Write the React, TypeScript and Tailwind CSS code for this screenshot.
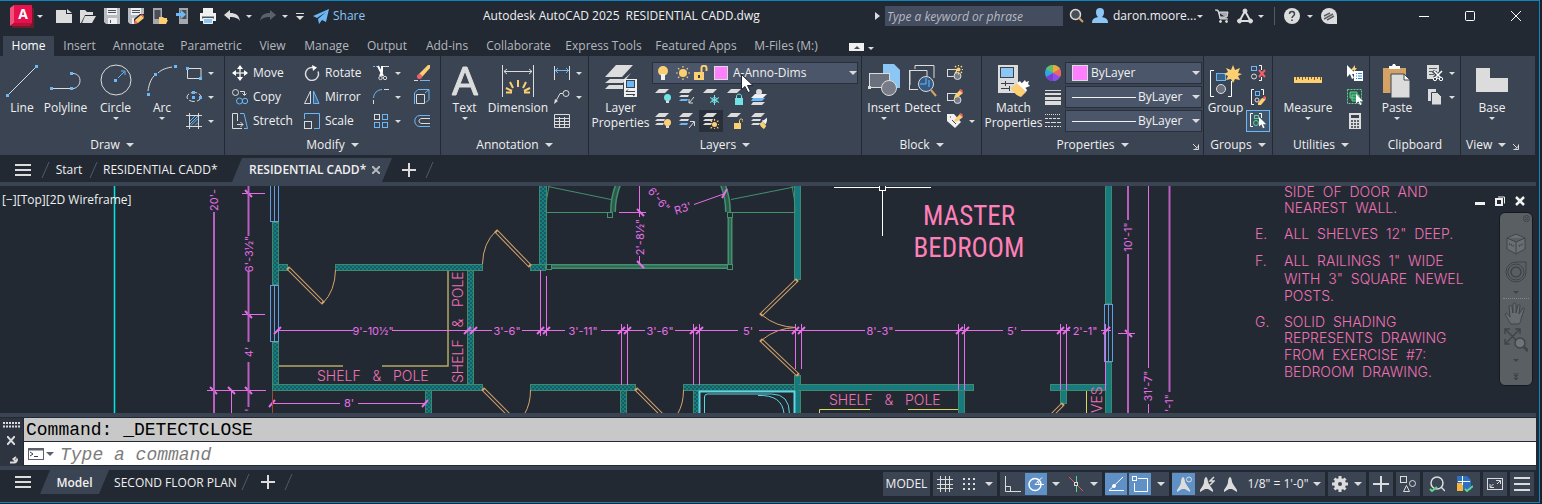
import type { ReactNode } from "react";
import clsx from "clsx";

const L = "#dcdcdc";
const B = "#6cb8f6";
const Y = "#fdcf73";
const G = "#5fd38d";
const R = "#f2606a";
const P = "#3b4453";

/* ---------- shared bits ---------- */

type IconProps = { w?: number; h?: number; children: ReactNode };

const Svg = ({ w = 16, h = 16, children }: IconProps) => (
    <svg width={w} height={h} viewBox={`0 0 ${w} ${h}`} fill="none" stroke={L} className="shrink-0" aria-hidden="true">
        {children}
    </svg>
);

const Arrow = ({ big = false }: { big?: boolean }) => (
    <svg width={big ? 8 : 6} height={big ? 4 : 3} viewBox="0 0 8 4" className="shrink-0" aria-hidden="true">
        <path d="M0 0h8L4 4z" fill={L} />
    </svg>
);

const ArrowButton = ({ label, className, big }: { label: string; className?: string; big?: boolean }) => (
    <button aria-label={label} className={clsx("flex h-6 items-center justify-center", className)}><Arrow big={big} /></button>
);

const Launcher = () => (
    <Svg w={7} h={7}><path d="M1 1l4 4" /><path d="M6.500 1.500v5h-5M3.500 6l3-3" /></Svg>
);

const Slash = () => (
    <svg width="10" height="16" viewBox="0 0 10 16" className="shrink-0" aria-hidden="true">
        <path d="M8 0L1 16" stroke="#505a69" />
    </svg>
);

const Hamburger = ({ h = 12 }: { h?: number }) => (
    <svg width="16" height={h} viewBox={`0 0 16 ${h}`} className="shrink-0" aria-hidden="true">
        <path d={`M0 1h16M0 ${h / 2}h16M0 ${h - 1}h16`} stroke={L} strokeWidth="2" />
    </svg>
);

const Plus = () => <Svg w={14} h={14}><path d="M7 0v14M0 7h14" strokeWidth="2" /></Svg>;

/* ---------- title bar ---------- */

const FloppyBody = () => (
    <>
        <path d="M0 0h16v16H2l-2-2z" fill="#b9bcc0" stroke="none" />
        <path d="M3 0h10v7H3zM4 10h9v6H4z" fill="#f0f0f0" stroke="none" />
        <path d="M4 2.500h8M4 4.500h8M6.500 12v3" stroke="#4a5260" />
    </>
);

const Pencil = () => (
    <g stroke="none">
        <path d="M7 12l6-5 3 3-6 5-4 1z" fill={Y} />
        <path d="M13 7l1-1 2 2v2z" fill={R} />
        <path d="M6 16l1-4 3 3z" fill={R} />
    </g>
);

const quickAccess = [
    { label: "New", icon: <path d="M0 2h10v4h6v9H0zM11 1l5 4h-5z" fill={L} stroke="none" /> },
    { label: "Open", icon: <path d="M0 2h5l2 2h6v3H5l-4 8H0zM5 8h11l-4 7H2z" fill={L} stroke="none" /> },
    { label: "Save", icon: <FloppyBody /> },
    { label: "Save As", icon: <><FloppyBody /><path d="M6 11l6-5h4v10H6z" fill="#222933" stroke="none" /><Pencil /></> },
    {
        label: "Open from Web & Mobile",
        icon: <><path d="M1 0h9v16H1z" fill="#a5a8ac" stroke="none" /><path d="M2.500 2h6v9h-6z" fill="#4a4f57" stroke="none" /><path d="M7 9h4l1 1h3v2H9l-2 4zM9 12h7l-2 4H7z" fill={Y} stroke="none" /></>,
    },
    {
        label: "Save to Web & Mobile",
        icon: <><path d="M3 0h9v16H3z" fill="#a5a8ac" stroke="none" /><path d="M4.500 2h6v9h-6z" fill="#4a4f57" stroke="none" /><path d="M0 5h5V2l5 4.500L5 11V8H0z" fill={B} stroke="none" /></>,
    },
    {
        label: "Plot",
        icon: <><path d="M3 0h10v5H3zM0 5h16v8H0z" fill="#f0f0f0" stroke="none" /><path d="M2 9.500h12" stroke="#4a5260" strokeWidth="2" /><path d="M3.500 10.500h9v5h-9z" fill="#8cc6f5" stroke="#f0f0f0" /></>,
    },
];

const TitleBar = () => (
    <header className="flex h-[35px] items-start pt-[3px] text-xs">
        <div className="flex h-6 w-[483px] shrink-0 items-center">
            <button aria-label="Application menu" className="ml-[10px] shrink-0">
                <svg width="24" height="23" viewBox="0 0 24 23">
                    <path d="M2 3h22v20H2z" fill="#6b1d2c" />
                    <path d="M0 3L4 0v18l-4 3z" fill="#f0527b" />
                    <path d="M4 0h18v18H4z" fill="#e5124d" />
                    <path d="M0 21l4-3h18l-2 3z" fill="#b80f3c" />
                    <text x="13" y="14" textAnchor="middle" fontSize="14" fontWeight="700" fill="#fff">A</text>
                </svg>
            </button>
            <ArrowButton label="More" className="ml-[2px] mr-[8px] w-2" />
            {quickAccess.map((q) => (
                <button key={q.label} aria-label={q.label} className="flex h-6 w-6 shrink-0 items-center justify-center"><Svg>{q.icon}</Svg></button>
            ))}
            <button aria-label="Undo" className="flex w-6 justify-center">
                <Svg><path d="M0 7l6-5v3c6 0 9 2 10 8-2-3-5-4-10-4v3z" fill={L} stroke="none" /></Svg>
            </button>
            <ArrowButton label="Undo list" className="w-[10px]" />
            <button aria-label="Redo" className="ml-[2px] flex w-6 justify-center">
                <Svg><path d="M16 7l-6-5v3C4 5 1 7 0 13c2-3 5-4 10-4v3z" fill="#5b616b" stroke="none" /></Svg>
            </button>
            <ArrowButton label="Redo list" className="w-[10px]" />
            <button aria-label="Customize" className="ml-[6px] flex w-2 flex-col items-center gap-[2px]">
                <Svg w={8} h={1}><path d="M0 .5h8" /></Svg>
                <Arrow big />
            </button>
            <button className="ml-[9px] flex items-center gap-1 text-[#8cc6f5]">
                <Svg><path d="M0 8L16 1l-3 13-4-2-3 4-1-5 8-7-9 6z" fill={B} stroke="none" /></Svg>
                Share
            </button>
        </div>
        <h1 className="flex h-6 min-w-0 flex-1 items-center gap-[6px] truncate text-[#f0f0f0]">
            <span>Autodesk AutoCAD 2025</span><span>RESIDENTIAL CADD.dwg</span>
        </h1>
        <div className="flex h-6 shrink-0 items-center">
            <Svg w={5} h={8}><path d="M0 0l5 4-5 4z" fill={L} stroke="none" /></Svg>
            <input aria-label="Search" placeholder="Type a keyword or phrase" className="ml-[5px] h-5 w-[178px] bg-[#434d5f] px-[2px] text-xs italic placeholder:text-[#b6bac0] outline-none" />
            <button aria-label="Search" className="ml-[6px]">
                <Svg><circle cx="6.500" cy="6.500" r="5" strokeWidth="1.500" fill="#4a4f57" /><path d="M10 10l4 4" stroke="#d5a266" strokeWidth="2" /></Svg>
            </button>
            <button className="ml-[7px] flex items-center gap-[5px] text-[#f0f0f0]">
                <Svg><path d="M4 4a4 4 0 018 0c0 3-1 4-2 5 4 1 6 2 6 6H0c0-4 2-5 6-6-1-1-2-2-2-5z" fill="#8cc6f5" stroke="none" /></Svg>
                <span className="w-[78px] whitespace-nowrap text-left">daron.moore...</span>
            </button>
            <ArrowButton label="Account menu" className="ml-[6px] w-[6px]" />
            <button aria-label="App store" className="ml-3">
                <Svg w={14} h={14}><path d="M0 1h3l2 9h8M4 3h9l-1 5H5z" fill="#a5a8ac" /><circle cx="5.500" cy="12.500" r="1" fill={L} /><circle cx="11.500" cy="12.500" r="1" fill={L} /></Svg>
            </button>
            <button aria-label="Autodesk" className="ml-2">
                <Svg><path d="M8 3L2.500 13h11z" strokeWidth="2" /><circle cx="8" cy="3" r="2" fill={L} /><circle cx="2.500" cy="13" r="2" fill={L} /><circle cx="13.500" cy="13" r="2" fill={L} /></Svg>
            </button>
            <ArrowButton label="Autodesk menu" className="ml-[5px] w-[6px]" />
            <span className="ml-[10px] h-[18px] border-l border-[#505a69]" />
            <button aria-label="Help" className="ml-[9px]">
                <Svg><circle cx="8" cy="8" r="8" fill={L} stroke="none" /><path d="M5.500 6c0-3.500 5-3.500 5 0 0 2-2.500 2-2.500 4M8 11.500v1.500" stroke="#39414d" strokeWidth="1.500" /></Svg>
            </button>
            <ArrowButton label="Help menu" className="ml-[7px] w-[6px]" />
            <button aria-label="Feed" className="ml-2">
                <Svg><path d="M8 0a8 8 0 018 8v8H8A8 8 0 018 0z" fill={L} stroke="none" /><path d="M3 8l6-3M3 11l9-5M6 12l7-4" stroke="#5b616b" strokeWidth="1.500" /></Svg>
            </button>
            <button aria-label="Minimize" className="ml-[82px]"><Svg w={10} h={10}><path d="M0 5.500h10" stroke="#fff" /></Svg></button>
            <button aria-label="Maximize" className="ml-9"><Svg w={10} h={10}><rect x=".5" y=".5" width="9" height="9" rx="1" stroke="#fff" /></Svg></button>
            <button aria-label="Close" className="ml-9 mr-[18px]"><Svg w={10} h={10}><path d="M0 0l10 10M10 0L0 10" stroke="#fff" /></Svg></button>
        </div>
    </header>
);

/* ---------- ribbon tabs ---------- */

const ribbonTabs = [
    { name: "Home", w: "w-[51px]" },
    { name: "Insert", w: "w-[51px]" },
    { name: "Annotate", w: "w-[67px]" },
    { name: "Parametric", w: "w-[78px]" },
    { name: "View", w: "w-[45px]" },
    { name: "Manage", w: "w-[63px]" },
    { name: "Output", w: "w-[58px]" },
    { name: "Add-ins", w: "w-[62px]" },
    { name: "Collaborate", w: "w-[81px]" },
    { name: "Express Tools", w: "w-[89px]" },
    { name: "Featured Apps", w: "w-[96px]" },
    { name: "M-Files (M:)", w: "w-[84px]" },
];

const RibbonTabs = () => (
    <nav className="flex h-5 pl-[3px] text-xs">
        {ribbonTabs.map((t, i) => (
            <button key={t.name} className={clsx("shrink-0 whitespace-nowrap", t.w, i === 0 ? "bg-[#3b4453] text-white" : "text-[#b4b8be]")}>{t.name}</button>
        ))}
        <button aria-label="Minimize ribbon" className="ml-[21px] mt-[7px] flex h-2 w-[15px] items-center justify-center bg-[#f0f0f0]">
            <Svg w={6} h={3}><path d="M0 3l3-3 3 3z" fill="#4a4f57" stroke="none" /></Svg>
        </button>
        <ArrowButton label="Ribbon options" className="ml-1 w-[6px]" />
    </nav>
);

/* ---------- ribbon ---------- */

const Panel = ({ name, className, menu = true, launcher, children }: { name: string; className: string; menu?: boolean; launcher?: boolean; children: ReactNode }) => (
    <section className={clsx("flex h-full shrink-0 flex-col border-r border-[#222933]", className)}>
        <div className="flex h-[80px] pt-[5px]">{children}</div>
        <div className="relative flex h-[18px] items-center justify-center">
            <button className="flex items-center gap-[6px]">{name}{menu && <Arrow big />}</button>
            {launcher && <button aria-label={name + " settings"} className="absolute right-1 top-[7px]"><Launcher /></button>}
        </div>
    </section>
);

const Big = ({ label, w, arrow, children }: { label: string; w: string; arrow?: boolean; children: ReactNode }) => (
    <button className={clsx("flex shrink-0 flex-col items-center pt-[3px] leading-[15px]", w)}>
        <Svg w={34} h={34}>{children}</Svg>
        <span className="mt-[2px] whitespace-pre-line">{label}</span>
        {arrow && <span className="mt-[2px] flex"><Arrow /></span>}
    </button>
);

const Tool = ({ name, text, arrow, active, children }: { name: string; text?: boolean; arrow?: boolean; active?: boolean; children: ReactNode }) => (
    <div className="flex h-6 items-center">
        <button aria-label={name} className={clsx("flex shrink-0 items-center gap-[5px]", active ? "-mx-1 h-[22px] bg-[#2a303b] px-1" : "h-6")}>
            <Svg>{children}</Svg>
            {text && name}
        </button>
        {arrow && <ArrowButton label={name + " options"} className="ml-[6px] w-[6px]" />}
    </div>
);

const Dot = ({ x, y }: { x: number; y: number }) => <rect x={x} y={y} width="3" height="3" fill={B} stroke="none" />;

// stacked sheets used by every layer tool
const Sheets = ({ n = 3, tint }: { n?: number; tint?: boolean }) => (
    <g stroke="none" fill={L}>
        <path d="M4 0h10l-4 4H0z" />
        {n > 1 && <path d="M2 6h8l-1 2H0z" />}
        {n > 2 && <path d="M2 10h7l-1 2H0z" fill={tint ? B : L} />}
    </g>
);

const Brush = () => (
    <g stroke="none">
        <path d="M6 9l4-3 5 6-3 4c-2-1-5-4-6-7z" fill={Y} />
        <path d="M9 5l3-1 4-3v4l-1 3-1 2z" fill="#f0f0f0" />
    </g>
);

const Sun = ({ cx, cy, r = 3 }: { cx: number; cy: number; r?: number }) => (
    <g stroke={Y}>
        <circle cx={cx} cy={cy} r={r} fill={Y} stroke="none" />
        <g transform={`translate(${cx} ${cy})`}>
            {[0, 45, 90, 135, 180, 225, 270, 315].map((a) => <path key={a} d={`M0 ${-r - 1.2}v-1.800`} strokeWidth="1.200" transform={`rotate(${a})`} />)}
        </g>
    </g>
);

const Bulb = ({ x, y, c = Y }: { x: number; y: number; c?: string }) => (
    <g stroke="none" transform={`translate(${x} ${y})`}>
        <circle cx="3.500" cy="3.500" r="3.500" fill={c} />
        <path d="M2 6.500h3V9H2z" fill={L} />
    </g>
);

const Cursor = () => <path d="M0 0v12l3-3 2 5 2-1-2-4h4z" fill="#fff" stroke="none" />;

const BlockMini = () => <><rect x=".5" y="4.500" width="9" height="7" /><circle cx="10.500" cy="11" r="3.500" fill="#777c86" /></>;

const PencilMini = () => (
    <g stroke="none">
        <path d="M7 9l1-3 5-5 3 3-5 4z" fill={Y} />
        <path d="M12 1l2-1 2 2-1 2z" fill={R} />
    </g>
);

const ByLayer = ({ label, line }: { label: string; line?: boolean }) => (
    <label className="flex h-[22px] items-center border border-[#2a303b] bg-[#4b566a] pl-1">
        {line
            ? <span className="ml-[2px] w-16 border-t border-[#f0f0f0]" />
            : <span className="ml-[2px] h-4 w-4 border border-[#dcdcdc] bg-[#ff80ff]" />}
        <select aria-label={label} className={clsx("flex-1 appearance-none outline-none", line ? "ml-[2px]" : "ml-[3px]")}><option>ByLayer</option></select>
        <span className="mr-[1px] flex"><Arrow big /></span>
    </label>
);

const Ribbon = () => (
    <div className="mr-1 flex h-[99px] bg-[#3b4453] text-xs text-[#f0f0f0]">
        <Panel name="Draw" className="w-[225px]">
            <Big label="Line" w="w-11"><path d="M4 30L30 4" /><Dot x={1} y={30} /><Dot x={30} y={1} /></Big>
            <Big label="Polyline" w="w-[43px]"><path d="M4 24.500h17M24 9.500c3 0 7 2 7 7s-4 8-7 8" /><Dot x={1} y={23} /><Dot x={21} y={23} /><Dot x={21} y={8} /></Big>
            <Big label="Circle" w="w-[57px]" arrow><circle cx="17" cy="16" r="15" /><path d="M19 14l6-6M22 7h4v4" stroke={B} /><Dot x={15} y={15} /></Big>
            <Big label="Arc" w="w-9" arrow><path d="M3 27C4 20 6 15 9 12M13 9c4-4 9-5 14-6" /><Dot x={2} y={29} /><Dot x={9} y={9} /><Dot x={29} y={1} /></Big>
            <div className="ml-[6px]">
                <Tool name="Rectangle" arrow><path d="M3 3.500h12v9M13 13.500H1.500V5" /><Dot x={0} y={2} /><Dot x={13} y={12} /></Tool>
                <Tool name="Ellipse" arrow><ellipse cx="8" cy="8" rx="7" ry="4.500" strokeDasharray="6 2" /><Dot x={6} y={2} /><Dot x={13} y={7} /><Dot x={6} y={7} /></Tool>
                <Tool name="Hatch" arrow><path d="M3.500 0v16M12.500 0v16M0 2.500h16M0 13.500h16" /><path d="M4 8l5-5M4 11l8-8M5 12.500l7-7M9 12.500l3-3" stroke={B} /></Tool>
            </div>
        </Panel>
        <Panel name="Modify" className="w-[216px]">
            <div className="w-[79px] shrink-0 pl-[7px]">
                <Tool name="Move" text><path d="M8 1v14M1 8h14" strokeWidth="1.500" /><path d="M8 0l3 4H5zM8 16l3-4H5zM0 8l4-3v6zM16 8l-4-3v6z" fill="#fff" stroke="none" /></Tool>
                <Tool name="Copy" text><circle cx="3.500" cy="3.500" r="3" /><path d="M8 2.500h4.500V6M10.500 4.500l2 2 2-2" /><circle cx="7.500" cy="12" r="3" stroke={B} /><circle cx="13" cy="12" r="2.700" stroke={B} /></Tool>
                <Tool name="Stretch" text><path d="M10 15.500H.5V.5h5V8M5 11.500h6M8.500 9l2.500 2.500L8.500 14" /><path d="M8 .5h4l3.500 15H12" stroke={B} /></Tool>
            </div>
            <div className="w-[69px] shrink-0">
                <Tool name="Rotate" text><path d="M9 2.500a6.500 6.500 0 105 4" strokeWidth="1.500" /><path d="M8 0l5 2.500L9 6z" fill="#fff" stroke="none" /></Tool>
                <Tool name="Mirror" text><path d="M6.500 2v12.500h-6z" /><path d="M9.500 2v12.500h5.500z" stroke={B} fill="#41688c" /></Tool>
                <Tool name="Scale" text><path d="M.5 6V.5h15v15H10" stroke={B} /><rect x=".5" y="8.500" width="7" height="7" /></Tool>
            </div>
            <div className="w-[41px] shrink-0">
                <Tool name="Trim" arrow><path d="M0 1.500h6" stroke={B} strokeDasharray="2 1" /><path d="M10 1.500h6" /><path d="M5 1l5 10M9 1v6l-2 4" stroke="#fff" strokeWidth="2" /><circle cx="7.500" cy="13" r="1.700" /><circle cx="12" cy="13" r="1.700" /></Tool>
                <Tool name="Fillet" arrow><path d="M.5 15v-4M11 .5h5" /><path d="M.5 9C1 4 4 1 9 .5" stroke={B} /></Tool>
                <Tool name="Array" arrow><rect x="1.500" y="1.500" width="5" height="5" /><g stroke={B}><rect x="9.500" y="1.500" width="5" height="5" /><rect x="1.500" y="9.500" width="5" height="5" /><rect x="9.500" y="9.500" width="5" height="5" /></g></Tool>
            </div>
            <div>
                <Tool name="Erase"><path d="M5 9l9-9h2v3l-8 9z" fill={Y} stroke="none" /><circle cx="5.500" cy="11.500" r="2.500" fill={R} stroke="none" /><path d="M0 15.500h4" /><path d="M6 15.500h10" stroke={B} /></Tool>
                <Tool name="Explode"><path d="M2.500 5.500h8v9h-8z" /><path d="M.5 4L4 .5h11v10l-3 3M11 4l4-3.500M.5 4v11" stroke={B} /></Tool>
                <Tool name="Offset"><path d="M16 5.500H8c-4 0-4 5 0 5h8" /><path d="M16 2.500H6c-7 0-7 11 0 11h10" stroke={B} /></Tool>
            </div>
        </Panel>
        <Panel name="Annotation" className="w-[148px]">
            <Big label="Text" w="w-[47px]" arrow><path d="M4 31L15 3h4l11 28h-4l-3-8H11l-3 8zM12 20h10L17 7z" fill={L} fillRule="evenodd" stroke={L} /></Big>
            <Big label="Dimension" w="w-[60px]"><path d="M1.500 1v32M32.500 1v32M3 7.500h28M6 5L3 7.500 6 10M28 5l3 2.500-3 2.500" /><path d="M17 16v7M9 18l3 6M25 18l-3 6M5 24l6 3M29 24l-6 3M5 28.500h6M23 28.500h6" stroke={Y} strokeWidth="2" /></Big>
            <div className="ml-[6px]">
                <Tool name="Linear" arrow><path d="M.5 1v14M15.500 1v14" /><path d="M1 5.500h14M4 3L1.500 5.500 4 8M12 3l2.500 2.500L12 8" stroke={B} /></Tool>
                <Tool name="Leader" arrow><circle cx="12" cy="4.500" r="3" /><path d="M9 4.500H6L2 12" /><path d="M0 15l1-5 3 2z" fill={L} stroke="none" /></Tool>
                <Tool name="Table"><path d="M.5 1.500h15v13H.5zM.5 8.500h15M.5 11.500h15M5.500 4v11M10.500 4v11" /><path d="M0 5.500h16" /></Tool>
            </div>
        </Panel>
        <Panel name="Layers" className="w-[273px]">
            <Big label={"Layer\nProperties"} w="w-[63px]">
                <g stroke="none" fill={L}><path d="M12 1h17L18 13H1z" /><path d="M6 15h14l7-6-8 10H1zM5 21h14v4H1z" /></g>
                <rect x="20" y="15" width="13" height="18" fill="#f0f0f0" stroke="none" /><rect x="22.500" y="16.500" width="8" height="7" fill={B} stroke="#39414d" /><path d="M22 27.500h9M24 25.500l-2 2M22 30.500h9M29 32l2-1.500" stroke="#39414d" />
            </Big>
            <div className="mt-[1px] w-[206px]">
                <div className="relative flex h-[22px] items-center border border-[#2a303b] bg-[#4b566a] pl-[4px]">
                    <div className="flex items-center gap-[2px]">
                        <Svg><circle cx="6" cy="6" r="5" fill={Y} stroke="none" /><path d="M4 9h4v6H4z" fill="#f0f0f0" stroke="none" /></Svg>
                        <Svg><Sun cx={8} cy={8} r={4} /></Svg>
                        <Svg><path d="M1 7h10v8H1z" fill={Y} stroke="none" /><path d="M8.500 7V3c0-3 5-3 5 0v3" stroke={Y} strokeWidth="2" /><path d="M6 10v3" stroke="#39414d" strokeWidth="2" /></Svg>
                        <span className="ml-[3px] h-[14px] w-[14px] border border-[#dcdcdc] bg-[#ff80ff]" />
                    </div>
                    <select aria-label="Layer" className="ml-[5px] flex-1 appearance-none outline-none"><option>A-Anno-Dims</option></select>
                    <span className="flex"><Arrow big /></span>
                    <svg width="13" height="19" viewBox="0 0 13 19" className="absolute left-[88px] top-[11px]" aria-hidden="true">
                        <path d="M.5.5v15l3.500-3 3 6 2.500-1-3-6H12z" fill="#fff" stroke="#222933" />
                    </svg>
                </div>
                <div className="mt-[1px] flex gap-2 pl-[3px]">
                    <Tool name="Off"><Sheets n={1} /><Bulb x={9} y={5} c="#6fe3e6" /></Tool>
                    <Tool name="Isolate"><Sheets tint /><path d="M15 8l-5 6M10 10v4h4" /></Tool>
                    <Tool name="Freeze"><Sheets n={1} /><path d="M11.500 6v10M7 8.500l9 5M16 8.500l-9 5" stroke="#6fe3e6" /><circle cx="11.500" cy="11" r="2.500" stroke="#6fe3e6" /></Tool>
                    <Tool name="Lock"><Sheets n={1} /><path d="M8 9h8v7H8z" fill="#6fe3e6" stroke="none" /><path d="M9.500 9V7c0-2.500 5-2.500 5 0v2" stroke="#6fe3e6" /></Tool>
                    <Tool name="Make Current"><path d="M4 5h12l-4 4H0z" fill="#f0f0f0" stroke="none" /><path d="M2 9h12l-3 3H0z" fill={B} stroke="none" /><path d="M2 13h12l-3 3H0z" fill={L} stroke="none" /><circle cx="8" cy="3" r="3" fill={L} stroke="none" /></Tool>
                </div>
                <div className="flex gap-2 pl-[3px]">
                    <Tool name="Turn All On"><Sheets /><Bulb x={9} y={6} /></Tool>
                    <Tool name="Unisolate"><Sheets tint /><path d="M10 15l5-6M11 8.500h4.500V13" /></Tool>
                    <Tool name="Thaw All" active><Sheets /><Sun cx={11.5} cy={11.5} r={2.5} /></Tool>
                    <Tool name="Unlock"><Sheets n={1} /><path d="M7 10h7v6H7z" fill={Y} stroke="none" /><path d="M12.500 10V7.500c0-2 3.500-2 3.500 0V9" stroke={Y} /></Tool>
                    <Tool name="Match Layer"><Sheets /><g transform="translate(4 4) scale(.75)"><Brush /></g></Tool>
                </div>
            </div>
        </Panel>
        <Panel name="Block" className="w-[120px]">
            <Big label="Insert" w="w-[43px]" arrow><path d="M16 0h11l6 6v18H16z" fill="#8cc6f5" stroke="none" /><rect x="2.500" y="9.500" width="20" height="14" fill="#6b717c" /><circle cx="22" cy="24" r="7.500" fill="#777c86" /><path d="M1 22h3v3H1z" fill={L} stroke="none" /></Big>
            <Big label="Detect" w="w-[35px]"><path d="M4 21V6.500h17V12M9 5V1.500h19V14M4 25.500h8M3.500 6v20" /><circle cx="20" cy="20" r="7.500" fill="#355a85" /><path d="M20 14v6h-6M23 16v7" stroke={B} /><path d="M25 26l5 6" stroke="#d5a266" strokeWidth="2" /></Big>
            <div className="ml-[7px]">
                <Tool name="Create Block"><BlockMini /><Sun cx={11.5} cy={4.5} r={2} /></Tool>
                <Tool name="Edit Block"><BlockMini /><PencilMini /></Tool>
                <Tool name="Edit Attributes" arrow><path d="M0 1h7l7 8-6 6-8-7z" fill="#f0f0f0" stroke="none" /><path d="M3 4h1M5 7l4 4" stroke={P} /><PencilMini /></Tool>
            </div>
        </Panel>
        <Panel name="Properties" className="w-[222px]" launcher>
            <Big label={"Match\nProperties"} w="w-[63px]">
                <path d="M1 1h20v28H1z" fill={L} stroke="none" /><rect x="3.500" y="3.500" width="13" height="10" fill="#8cc6f5" stroke="#39414d" /><path d="M4 19.500h13M4 24.500h9M8.500 17v5M12.500 22v5" stroke="#39414d" />
                <path d="M14 24l7-5 8 9-5 5c-4-1-8-5-10-9z" fill={Y} stroke="none" /><path d="M20 19l3-2 7 9-1 2zM24 20l4-4 1 2 3-1-1 3 2 2-5 2z" fill="#fff" stroke="none" />
            </Big>
            <div className="w-[20px]">
                <Tool name="Object Color">
                    <g stroke="none"><circle cx="8" cy="8" r="8" fill="#2fa8e0" /><path d="M8 8V0a8 8 0 017 4z" fill="#f0a830" /><path d="M8 8l7-4a8 8 0 010 8z" fill="#f2606a" /><path d="M8 8l7 4a8 8 0 01-7 4z" fill="#8a4fe8" /><path d="M8 8v8a8 8 0 01-7-4z" fill="#7a3fd0" /><path d="M8 8L1 4a8 8 0 017-4z" fill="#5fbf6a" /></g>
                </Tool>
                <Tool name="Lineweight"><path d="M0 1.500h16" /><path d="M0 5h16" strokeWidth="2" /><path d="M0 9.500h16" strokeWidth="3" /><path d="M0 14h16" strokeWidth="4" /></Tool>
                <Tool name="Linetype"><path d="M0 1.500h16" strokeDasharray="1 1" /><path d="M0 5.500h16" strokeDasharray="3 1" /><path d="M0 9.500h16" strokeDasharray="5 1" /><path d="M0 13.500h16" strokeDasharray="2 1" /></Tool>
            </div>
            <div className="mt-[1px] flex w-[137px] flex-col gap-[2px]">
                <ByLayer label="Object color" />
                <ByLayer label="Lineweight" line />
                <ByLayer label="Linetype" line />
            </div>
        </Panel>
        <Panel name="Groups" className="w-[69px]">
            <Big label="Group" w="w-[43px]"><path d="M5 6.500H1.500v26H5M19 32.500h3.500V17" stroke="#fff" /><rect x="7.500" y="9.500" width="9" height="7" fill="#3c6186" stroke={B} /><circle cx="12" cy="25" r="4.500" fill="#6b717c" /><path d="M24 1l2 5 5-2-2 5 4 1-4 2 2 4-5-1-2 4-2-4-5 1 2-4-4-2 4-2-2-4 5 2z" fill={Y} stroke="none" /></Big>
            <div className="ml-1">
                <Tool name="Ungroup"><rect x=".5" y="1.500" width="5" height="4" stroke={B} /><circle cx="3" cy="11.500" r="2.500" /><path d="M8 .5h2.500V5M10.500 12v3.500H8" stroke="#fff" /><path d="M8 5l6 7M14 5l-6 7" stroke={R} strokeWidth="2" /></Tool>
                <Tool name="Group Edit"><path d="M3 .5H.5v15H3M10 .5h2.500V6" stroke="#fff" /><rect x="4.500" y="2.500" width="4" height="4" stroke={B} /><circle cx="6" cy="11" r="2" /><path d="M7 14l4-5 4 1-5 6H7z" fill={Y} stroke="none" /><path d="M13 7l2 1v3l-3-2z" fill={R} stroke="none" /></Tool>
                <div className="-ml-[5px] mt-[1px] flex h-[22px] w-6 items-center justify-center border border-[#6cb8f6] bg-[#41566d]">
                    <button aria-label="Group selection" className="flex"><Svg><path d="M3 .5H.5v13H3M9 .5h2.500V5" stroke="#fff" /><rect x="4.500" y="2.500" width="4" height="3" stroke={G} /><circle cx="6" cy="10" r="2.500" stroke={G} /><g transform="translate(9 4) scale(.8)"><Cursor /></g></Svg></button>
                </div>
            </div>
        </Panel>
        <Panel name="Utilities" className="w-[97px]">
            <Big label="Measure" w="w-[70px]" arrow><path d="M3 13h28v6H3z" fill={Y} stroke="none" /><path d="M5.500 13v3M8.500 13v2M11.500 13v3M14.500 13v2M17.500 13v3M20.500 13v2M23.500 13v3M26.500 13v2M29.500 13v3" stroke="#7a5f2c" /></Big>
            <div className="ml-1">
                <Tool name="Quick Select"><path d="M8 0l-4 5h3L6 8l4-5H8z" fill={Y} stroke="none" /><Cursor /><path d="M7 6h9v10H7z" fill="#fff" stroke="none" /><path d="M9 8.500h1M9 11h1M9 13.500h1M11 8.500h4M11 11h4M11 13.500h4" stroke="#2a8fd8" /></Tool>
                <Tool name="Select All"><rect x=".5" y=".5" width="14" height="14" stroke={G} strokeDasharray="2 1" /><path d="M3 3h7v6H3zM5 6h7v6H5z" fill="#2f8a5a" stroke={G} /><g transform="translate(9 5) scale(.8)"><Cursor /></g></Tool>
                <Tool name="Calculator"><path d="M2 0h12v16H2z" fill={L} stroke="none" /><path d="M4 3.500h8" stroke="#39414d" strokeWidth="3" /><path d="M4 8h8M4 11h8M4 14h8" stroke="#5b616b" strokeWidth="2" strokeDasharray="2 1" /></Tool>
            </div>
        </Panel>
        <Panel name="Clipboard" menu={false} className="w-[91px]">
            <Big label="Paste" w="w-[54px]" arrow><path d="M3 4h23v25H3z" fill="#d5a266" stroke="none" /><path d="M9 5h11V2h-4l-1-2h-2l-1 2H9z" fill="#fff" stroke="none" /><path d="M11 10h13l6 6v18H11z" fill={L} stroke={P} /><path d="M24 10v6h6z" fill="#fff" stroke={P} /></Big>
            <div className="ml-[3px]">
                <Tool name="Cut" arrow><path d="M0 0h12v14H0z" fill={L} stroke="none" /><path d="M2 3.500h8M2 6.500h8M2 9.500h5" stroke="#5b616b" /><path d="M6 6l8 7M15 6l-8 7" stroke={P} strokeWidth="3" /><path d="M7 6l7 7M15 6l-7 7" stroke="#fff" strokeWidth="1.500" /><circle cx="8" cy="14" r="1.700" fill={P} stroke="#fff" /><circle cx="14" cy="14" r="1.700" fill={P} stroke="#fff" /></Tool>
                <Tool name="Copy Clip" arrow><path d="M1 0h8v12H1z" fill={L} stroke="none" /><path d="M4.500 3.500h6l4 4v8.500h-10z" fill={L} stroke={P} /></Tool>
            </div>
        </Panel>
        <section className="flex min-w-[74px] flex-1 flex-col">
            <div className="flex h-[80px] pl-[9px] pt-[5px]">
                <Big label="Base" w="w-[44px]" arrow><path d="M1 4h14v10h18v14H1z" fill={L} stroke="none" /></Big>
            </div>
            <div className="flex h-[18px] items-center gap-[6px] pl-[5px]">
                <button className="flex items-center gap-[6px]">View<Arrow big /></button>
                <button aria-label="View settings" className="mt-[2px]"><Launcher /></button>
            </div>
        </section>
    </div>
);

/* ---------- file tabs ---------- */

const FileTabs = () => (
    <nav className="flex h-6 items-center text-xs text-[#f0f0f0]">
        <button aria-label="File tabs" className="ml-[15px]"><Hamburger /></button>
        <span className="ml-[10px] flex"><Slash /></span>
        <button className="ml-[4px] w-[28px]">Start</button>
        <span className="ml-[6px] flex"><Slash /></span>
        <button className="ml-1 w-[113px] whitespace-nowrap">RESIDENTIAL CADD*</button>
        <div className="ml-[16px] flex h-6 w-[160px] items-center gap-2 bg-[#3b4453] pl-[17px] [clip-path:polygon(10px_0,100%_0,calc(100%-10px)_100%,0_100%)]">
            <button className="w-[115px] whitespace-nowrap text-left font-semibold">RESIDENTIAL CADD*</button>
            <button aria-label="Close tab"><Svg w={8} h={8}><path d="M0 0l8 8M8 0L0 8" strokeWidth="2" stroke="#b4b8be" /></Svg></button>
        </div>
        <button aria-label="New drawing" className="ml-[10px]"><Plus /></button>
        <span className="ml-[9px] flex"><Slash /></span>
    </nav>
);

/* ---------- model space ---------- */

const DIM = "#e86ee8";

const Wall = ({ x, y, w, h, solid }: { x: number; y: number; w: number; h: number; solid?: boolean }) => (
    <rect x={x + 0.5} y={y + 0.5} width={w - 1} height={h - 1} fill={solid ? "#167a7e" : "url(#hatch)"} stroke="#3d8a6c" />
);

const Win = ({ x, y, h }: { x: number; y: number; h: number }) => (
    <g stroke="#5f9fe0">
        <rect x={x + 0.5} y={y + 0.5} width="8" height={h - 1} fill="#222933" />
        <path d={`M${x + 4.5} ${y}v${h}`} />
    </g>
);

const Leaf = ({ d }: { d: string }) => (
    <>
        <path d={d} stroke="#d6a36c" strokeWidth="4" strokeLinecap="square" />
        <path d={d} stroke="#222933" strokeWidth="2" />
    </>
);

const DimText = ({ x, y, r = 0, children }: { x: number; y: number; r?: number; children: string }) => (
    <text x={x} y={y} fontSize="11" textAnchor="middle" stroke="none" fill={DIM} transform={r ? `rotate(${r} ${x} ${y})` : undefined}>{children}</text>
);

// drafting lettering leaves a wide gap between words
const Label = ({ x, y, r = 0, gap = "   ", children }: { x: number; y: number; r?: number; gap?: string; children: string }) => (
    <text x={x} y={y} fontSize="14" fontWeight="300" stroke="none" fill="#ee72b4" className="whitespace-pre" transform={r ? `rotate(${r} ${x} ${y})` : undefined}>
        {children.replace(/ /g, gap)}
    </text>
);

const hTicks = [277, 467, 473, 540, 546, 621, 627, 693, 699, 795, 801, 959, 965, 1060, 1066, 1106];
const vTicks = [[248, 193], [248, 314], [213, 390], [231, 390], [248, 390], [640, 212], [640, 264], [1128, 333]];
const runs = [[277, 353], [392, 492], [522, 565], [601, 645], [675, 738], [759, 865], [895, 1003], [1021, 1070], [1101, 1111]];
const extensions = [[540, 270, 336], [546, 276, 336], [621, 324, 385], [627, 324, 385], [693, 324, 385], [699, 324, 385], [795, 324, 369], [801, 324, 369], [958, 324, 390], [964, 324, 390], [1060, 324, 390], [1066, 324, 390], [1105, 324, 390]];

const hDims: [number, string][] = [[373, "9'-10½\""], [507, "3'-6\""], [583, "3'-11\""], [660, "3'-6\""], [748, "5'"], [880, "8'-3\""], [1012, "5'"], [1085, "2'-1\""]];

const notes: [number, string, string?][] = [
    [197, "SIDE OF DOOR AND"],
    [213, "NEAREST WALL."],
    [239, "ALL SHELVES 12\" DEEP.", "E."],
    [266, "ALL RAILINGS 1\" WIDE", "F."],
    [284, "WITH 3\" SQUARE NEWEL"],
    [301, "POSTS."],
    [327, "SOLID SHADING", "G."],
    [343, "REPRESENTS DRAWING"],
    [360, "FROM EXERCISE #7:"],
    [377, "BEDROOM DRAWING."],
];

const FloorPlan = () => (
    <svg width="1536" height="227" viewBox="0 186 1536 227" fill="none" className="block max-w-none font-['Inter',sans-serif]">
        <defs>
            <pattern id="hatch" width="4" height="4" patternUnits="userSpaceOnUse">
                <rect width="4" height="4" fill="#17807f" />
                <path d="M0 0h2v2H0zM2 2h2v2H2z" fill="#195c68" />
            </pattern>
        </defs>
        <path d="M114.500 186v227" stroke="#00e8e4" strokeWidth="1.500" />

        {/* closets and shelves */}
        <path d="M277 366H343M382 366H448V270" stroke="#b5a862" strokeWidth="1.500" />
        <path d="M819.500 413v-3.500H870M908 409.500h51M1086.500 390v23" stroke="#d9d75c" />

        {/* walls */}
        <Wall x={272} y={222} w={7} h={63} />
        <Wall x={272} y={342} w={7} h={46} />
        <Wall x={278} y={264} w={10} h={7} />
        <Wall x={335} y={264} w={148} h={7} />
        <Wall x={467} y={270} w={7} h={116} />
        <Wall x={539} y={180} w={8} h={90} />
        <Wall x={530} y={264} w={16} h={7} />
        <Wall x={425} y={389} w={7} h={26} />
        <Wall x={620} y={389} w={7} h={26} />
        <Wall x={693} y={389} w={7} h={26} />
        <Wall x={272} y={384} w={211} h={7} />
        <Wall x={530} y={384} w={106} h={7} />
        <Wall x={683} y={384} w={114} h={7} />
        <Wall x={794} y={180} w={7} h={100} solid />
        <Wall x={794} y={375} w={7} h={40} solid />
        <Wall x={958} y={389} w={7} h={26} solid />
        <Wall x={1060} y={389} w={7} h={15} solid />
        <Wall x={1105} y={180} w={7} h={124} solid />
        <Wall x={1105} y={362} w={7} h={53} solid />
        <Wall x={798} y={384} w={176} h={7} solid />
        <Wall x={1050} y={384} w={57} h={7} solid />
        <path d="M797 387.500h6M1104 387.500h5" stroke="#167a7e" strokeWidth="5" />
        <Win x={270} y={180} h={42} />
        <Win x={270} y={285} h={57} />
        <Win x={1104} y={304} h={58} />

        {/* stairs */}
        <g stroke="#43916d">
            <path d="M546 212.500h64M548 186.500l63 13M729 212.500h66M731 199.500l63-12.500M546 212q0-14 3-26M795 212q0-14-3-26" />
            <path d="M613 212q0-14 5-27M728 212q0-14-5-27" strokeWidth="6" />
            <path d="M613 212q0-14 5-27M728 212q0-14-5-27" stroke="#2b5a4d" strokeWidth="3" />
            <path d="M551 266.500h177M730 217v48" strokeWidth="5" />
            <path d="M551 266.500h177M730 217v48" stroke="#2f6655" strokeWidth="2" />
            <g fill="#222933"><rect x="607.500" y="212.500" width="5" height="5" /><rect x="727.500" y="212.500" width="5" height="5" /><rect x="727.500" y="264.500" width="5" height="5" /><rect x="546.500" y="264.500" width="5" height="5" /></g>
        </g>

        {/* doors */}
        <Leaf d="M289 269L322 302" />
        <Leaf d="M497 232L529 265" />
        <Leaf d="M484 390L510 416" />
        <Leaf d="M637 390L663 416" />
        <Leaf d="M796 281L762 314" />
        <Leaf d="M762 341L797 374" />
        <Leaf d="M1062 405L1050 417" />
        <path d="M335.500 270Q335 291 323 303M482.500 264Q483 243 496 231M530.500 390q0 14-6 24M683.500 390q0 14-6 24M762 315q14 12 34 12.500M762 340q14-12 34-12.500" stroke="#d6a36c" />

        {/* bathtub */}
        <path d="M699.500 414V391.500h95V414" stroke="#5fd6e0" strokeWidth="2" />
        <path d="M704.500 414v-17q0-3 3-3h64q18 0 18 20M758 395.500q24-1 26 18" stroke="#5fd6e0" />

        {/* dimensions */}
        <g stroke={DIM}>
            {runs.map(([a, b]) => <path key={a} d={`M${a} 330.500H${b}`} />)}
            {extensions.map(([x, a, b]) => <path key={x} d={`M${x + 0.5} ${a}V${b}`} />)}
            {hTicks.map((x) => <path key={x} d={`M${x - 3} 334l7-7`} strokeWidth="2" />)}
            {vTicks.map(([x, y]) => <path key={`${x}-${y}`} d={`M${x - 3} ${y - 3}l7 7`} strokeWidth="2" />)}
            <path d="M242 193.500h23M242 314.500h23M207 390.500h59M619 212.500h27M1118 333.500h17" />
            <path d="M214 212V413M248.500 186v50M248.500 271v71M248.500 362v45M1128 186v34M1128 254v159M1169.500 186v206" stroke="#b95fc2" strokeWidth="2" />
            <path d="M231.500 390v23M639.500 186v31M639.500 256v9M1148.500 186v182M1148.500 404v9M272 403.500h68M358 403.500h67M694 204.500l31-11" />
            <path d="M269 407l6-7M422 407l6-7M722 198l5-9" strokeWidth="2" />
        </g>
        <path d="M272.500 391v22" stroke="#a3472c" />
        {hDims.map(([x, t]) => <DimText key={x} x={x} y={335}>{t}</DimText>)}
        <DimText x={349} y={407}>8'</DimText>
        <DimText x={218} y={200} r={-90}>20'-</DimText>
        <DimText x={253} y={254} r={-90}>6'-3½"</DimText>
        <DimText x={253} y={352} r={-90}>4'</DimText>
        <DimText x={253} y={410} r={-90}>'</DimText>
        <DimText x={644} y={237} r={-90}>2'-8½"</DimText>
        <DimText x={1132} y={237} r={-90}>10'-1"</DimText>
        <DimText x={1152} y={386} r={-90}>31'-7"</DimText>
        <DimText x={1173} y={403} r={-90}>'-1"</DimText>
        <DimText x={656} y={202} r={50}>6'-6"</DimText>
        <DimText x={684} y={212} r={-18}>R3'</DimText>

        {/* room names and notes */}
        <Label x={317} y={381}>SHELF & POLE</Label>
        <Label x={829} y={405}>SHELF & POLE</Label>
        <Label x={463} y={383} r={-90}>SHELF & POLE</Label>
        <Label x={1102} y={413} r={-90}>VES</Label>
        <g fontSize="27" fill="#ff80b8" textAnchor="middle" className="font-['Roboto_Condensed','Roboto',sans-serif]">
            <text x="969" y="225">MASTER</text>
            <text x="969" y="257">BEDROOM</text>
        </g>
        {notes.map(([y, text, letter]) => (
            <g key={y}>
                {letter && <Label x={1255} y={y}>{letter}</Label>}
                <Label x={1284} y={y} gap="  ">{text}</Label>
            </g>
        ))}

        <path d="M834 187.500h97M882.500 191v45" stroke="#fff" />
        <rect x="879.500" y="185.500" width="6" height="5" fill="#222933" stroke="#fff" />
    </svg>
);

const NAV = "#3f444b";

const ModelSpace = () => (
    <main className="relative h-[235px] overflow-hidden border-y-4 border-[#3b4453] bg-[#222933]">
        <FloorPlan />
        <p className="absolute left-[2px] top-[6px] text-xs text-[#f0f0f0]">[−][Top][2D Wireframe]</p>
        <div className="absolute right-[11px] top-[10px] flex items-end gap-[10px]">
            <button aria-label="Minimize viewport" className="mb-[1px]"><Svg w={10} h={3}><path d="M0 1.500h10" stroke="#f0f0f0" strokeWidth="3" /></Svg></button>
            <button aria-label="Restore viewport"><Svg w={10} h={10}><path d="M3 1h6.500v6.500" stroke="#f0f0f0" /><rect x="1" y="3" width="6" height="6" stroke="#f0f0f0" strokeWidth="2" /></Svg></button>
            <button aria-label="Close viewport"><Svg w={10} h={10}><path d="M1 1l8 8M9 1L1 9" stroke="#f0f0f0" strokeWidth="2.500" /></Svg></button>
        </div>
        <div className="absolute right-[3px] top-[26px] flex h-[174px] w-[34px] flex-col items-center rounded-md border border-[#15191f] bg-[#5a5f63] pt-[20px]">
            <button aria-label="Close navigation bar" className="absolute right-[2px] top-[2px]"><Svg w={7} h={7}><circle cx="3.500" cy="3.500" r="3" stroke={NAV} /><path d="M2 2l3 3M5 2L2 5" stroke={NAV} /></Svg></button>
            <button aria-label="ViewCube"><Svg w={22} h={22}><path d="M11 1l9 4v11l-9 5-9-5V5zM2 5l9 4 9-4M11 9v12" stroke={NAV} fill="#6a6f74" /><path d="M4 11l5 2M14 13l4-2" stroke={NAV} strokeWidth="2" strokeDasharray="1 1" /></Svg></button>
            <button aria-label="Steering wheel" className="mt-[6px]"><Svg w={22} h={22}><path d="M11 1h10v10A10 10 0 1111 1z" stroke={NAV} /><circle cx="11" cy="11" r="8" stroke={NAV} /><circle cx="11" cy="11" r="5" stroke={NAV} strokeWidth="1.500" /></Svg></button>
            <span className="mt-[8px] flex"><Svg w={6} h={3}><path d="M0 0h6L3 3z" fill={NAV} stroke="none" /></Svg></span>
            <span className="mt-[4px] w-[26px] border-t border-dotted border-[#83888d]" />
            <button aria-label="Pan" className="mt-[3px]"><Svg w={24} h={24}><path d="M7 22C5 19 3 16 1 12c1-1 2-1 5 3L5 4c1-1 2-1 3 1l1 6V2c1-1 2-1 3 0v9l2-8c1-1 2 0 2 1l-1 8 4-6c1 0 2 0 1 2l-3 9c0 2-1 4-2 5z" stroke={NAV} fill="#676c71" /></Svg></button>
            <button aria-label="Zoom extents" className="mt-[2px]"><Svg w={24} h={24}><path d="M1 6V1h5M1 1l15 15M16 6V1h-5M16 1L1 16M1 11v5h5" stroke={NAV} strokeWidth="1.500" /><circle cx="16" cy="15" r="5" stroke={NAV} fill="#6f7479" strokeWidth="1.500" /><path d="M20 19l4 4" stroke={NAV} strokeWidth="3" /></Svg></button>
            <span className="mt-[7px] flex"><Svg w={6} h={3}><path d="M0 0h6L3 3z" fill={NAV} stroke="none" /></Svg></span>
            <span className="mt-[11px] flex"><Svg w={6} h={7}><path d="M0 0h6M1 2h4L3 4zM1 5h4L3 7z" fill={NAV} stroke={NAV} /></Svg></span>
        </div>
    </main>
);

/* ---------- command line ---------- */

const CommandLine = () => (
    <section className="flex h-[49px] border-t border-[#222933]">
        <div className="flex w-[23px] shrink-0 flex-col items-start bg-[#2e3541] pt-1">
            <svg width="18" height="6" className="ml-[3px]" aria-hidden="true"><path d="M0 1h18M0 4.500h18" stroke={L} strokeWidth="2" strokeDasharray="2 1" /></svg>
            <button aria-label="Close command line" className="ml-[7px] mt-[8px]"><Svg w={8} h={9}><path d="M0 0l8 9M8 0L0 9" strokeWidth="2" /></Svg></button>
            <button aria-label="Customize command line" className="ml-[9px] mt-[11px]"><Svg w={9} h={9}><path d="M1 6.500h4c3 0 3-2 3-4M7 1L4.500 3l2 2" strokeWidth="2" /></Svg></button>
        </div>
        <div className="min-w-0 flex-1 border-l border-[#222933] font-['Liberation_Mono',monospace] text-lg">
            <p className="h-[23px] bg-[#c8c8c8] pl-[2px] leading-[25px] text-black">Command: _DETECTCLOSE</p>
            <label className="mt-[1px] flex h-[23px] items-center bg-white pl-1">
                <Svg w={16} h={12}><rect x=".5" y=".5" width="15" height="11" stroke="#5b616b" /><path d="M0 1.500h16" stroke="#5b616b" strokeWidth="2" /><path d="M2 4l3 2-3 2M6 8.500h4" stroke="#39414d" /></Svg>
                <Svg w={12} h={4}><path d="M2 0h8L6 4z" fill="#5b616b" stroke="none" /></Svg>
                <input aria-label="Command" placeholder="Type a command" className="ml-1 h-[23px] min-w-0 flex-1 pt-[2px] italic leading-[21px] placeholder:text-[#7c7c7c] outline-none" />
            </label>
        </div>
    </section>
);

/* ---------- status bar ---------- */

const Status = ({ label, on, w = "w-6", children }: { label: string; on?: boolean; w?: string; children: ReactNode }) => (
    <button aria-label={label} className={clsx("flex items-center justify-center", w, on ? "h-[22px] bg-[#5f90c6]" : "h-6")}>{children}</button>
);

const Cluster = ({ w, children }: { w: string; children: ReactNode }) => (
    <div className={clsx("flex h-6 shrink-0 items-center bg-[#3b4453]", w)}>{children}</div>
);

const Person = ({ children }: { children?: ReactNode }) => (
    <Svg><path d="M7 1c1 0 2 3 2 5 1 2 3 5 5 8v2l-5-3H6l-5 3v-2c2-3 4-6 4-8 0-2 1-5 2-5z" fill={L} stroke="none" />{children}</Svg>
);

const StatusBar = () => (
    <footer className="flex h-[33px] items-start border-b border-[#0d86bf] text-xs text-[#f0f0f0]">
        <button aria-label="Layout tabs" className="ml-[15px] mt-[6px]"><Hamburger /></button>
        <button className="ml-[9px] h-6 w-[69px] bg-[#3b4453] pt-[2px] font-semibold [clip-path:polygon(10px_0,100%_0,calc(100%-10px)_100%,0_100%)]">Model</button>
        <button className="ml-[5px] h-6 w-[123px] whitespace-nowrap pt-[2px]">SECOND FLOOR PLAN</button>
        <div className="ml-[4px] flex h-6 items-center">
            <Slash />
            <button aria-label="New layout" className="ml-[10px] mr-[9px]"><Plus /></button>
            <Slash />
        </div>
        <div className="ml-auto mr-[5px] mt-[2px] flex gap-[3px]">
            <Cluster w="w-[47px]"><button className="w-full text-center">MODEL</button></Cluster>
            <Cluster w="w-16">
                <Status label="Grid"><Svg><path d="M3.500 0v16M8.500 0v16M12.500 0v16M0 3.500h16M0 8.500h16M0 12.500h16" /></Svg></Status>
                <Status label="Snap"><Svg><path d="M2 3h14M2 8h14M2 13h14" strokeWidth="2" strokeDasharray="2 3" /></Svg></Status>
                <ArrowButton label="Snap options" big className="w-4" />
            </Cluster>
            <Cluster w="w-[102px]">
                <Status label="Ortho" w="w-[25px]"><Svg><path d="M.5 0v15.500H16M.5 10.500h5v5" /></Svg></Status>
                <Status label="Polar" on w="w-[22px]"><Svg><circle cx="7" cy="8.500" r="6" strokeWidth="1.500" stroke="#fff" /><path d="M7 8.500h9M7 8.500l7-7M9 5q2 1 2 3" stroke="#fff" /></Svg></Status>
                <ArrowButton label="Polar options" big className="w-[18px]" />
                <Status label="Isodraft" w="w-[21px]"><Svg><path d="M1 1l14 14" stroke="#e05a62" /><path d="M8.500 0v16" stroke={G} /><rect x="6.500" y="6.500" width="3" height="3" fill={P} /></Svg></Status>
                <ArrowButton label="Isodraft options" big className="w-[16px]" />
            </Cluster>
            <Cluster w="w-16">
                <div className="flex w-full items-center gap-[2px]">
                    <Status label="Tracking" on w="w-[22px]"><Svg><path d="M16 14.500H1L15 1" stroke="#fff" /><circle cx="6" cy="10" r="1.500" fill="#fff" stroke="#fff" /></Svg></Status>
                    <Status label="Object snap" on w="w-[22px]"><Svg><path d="M6 2.500h9.500v13h-13V7" stroke="#fff" /><rect x=".5" y=".5" width="4" height="4" stroke="#fff" /></Svg></Status>
                    <ArrowButton label="Snap settings" big className="w-[16px]" />
                </div>
            </Cluster>
            <Cluster w="w-[153px]">
                <Status label="Annotation visibility" on w="w-[23px]"><Person><circle cx="13" cy="3.500" r="2.500" /></Person></Status>
                <Status label="Auto scale"><Person><path d="M15 1l-4 4h4l-4 4" strokeWidth="1.500" /></Person></Status>
                <Status label="Annotation"><Person /></Status>
                <button className="flex flex-1 items-center justify-center gap-1 whitespace-nowrap">1/8" = 1'-0"<Arrow big /></button>
            </Cluster>
            <Cluster w="w-[38px]">
                <Status label="Workspace"><Svg><circle cx="8" cy="8" r="4" strokeWidth="4" /><path d="M8 0v3M8 13v3M0 8h3M13 8h3M2.500 2.500l2 2M11.500 11.500l2 2M13.500 2.500l-2 2M4.500 11.500l-2 2" strokeWidth="3" /></Svg></Status>
                <ArrowButton label="Workspace options" big className="w-3" />
            </Cluster>
            <Cluster w="w-6"><Status label="Annotation monitor"><Svg><path d="M8 0v16M0 8h16" strokeWidth="2" /></Svg></Status></Cluster>
            <Cluster w="w-6"><Status label="Isolate objects"><Svg><rect x=".5" y=".5" width="6" height="6" /><circle cx="12.500" cy="7.500" r="3" /><path d="M6.500 9.500l-3 6h6z" /></Svg></Status></Cluster>
            <Cluster w="w-[57px]">
                <Status label="Performance" w="w-7"><Svg><circle cx="8" cy="7" r="6" strokeWidth="1.500" /><path d="M12 11l4 4" strokeWidth="1.500" /><path d="M1 13l2 2 5-4" stroke={G} strokeWidth="2" /></Svg></Status>
                <Status label="Map" w="w-7"><Svg><path d="M0 0h10l4 4v10H0z" fill="#2f6fc0" stroke="none" /><path d="M0 7h6v8H0z" fill="#f5b53a" stroke="none" /><path d="M5.500 0v9M1 5.500h12" stroke="#fff" /><path d="M8 13l2 2 6-5" stroke={G} strokeWidth="2" /></Svg></Status>
            </Cluster>
            <Cluster w="w-6"><Status label="Clean screen"><Svg><rect x=".5" y="2.500" width="15" height="11" /><path d="M9 4.500h4.500V8M13 5l-3 3M3 8v3.500h4M3.500 11l3-3" /></Svg></Status></Cluster>
            <Cluster w="w-6"><Status label="Customization"><Hamburger h={14} /></Status></Cluster>
        </div>
    </footer>
);

export default function App() {
    return (
        <div className="bg-[#20202a] pb-[1px] pr-[2px] font-['Open_Sans',sans-serif]">
            <div className="overflow-hidden border-r border-t border-[#0d86bf] bg-[#222933]">
                <TitleBar />
                <RibbonTabs />
                <Ribbon />
                <div className="h-[3px]" />
                <FileTabs />
                <div className="mr-[3px] border-b-4 border-[#3b4453]">
                    <ModelSpace />
                    <CommandLine />
                </div>
                <StatusBar />
            </div>
        </div>
    );
}
